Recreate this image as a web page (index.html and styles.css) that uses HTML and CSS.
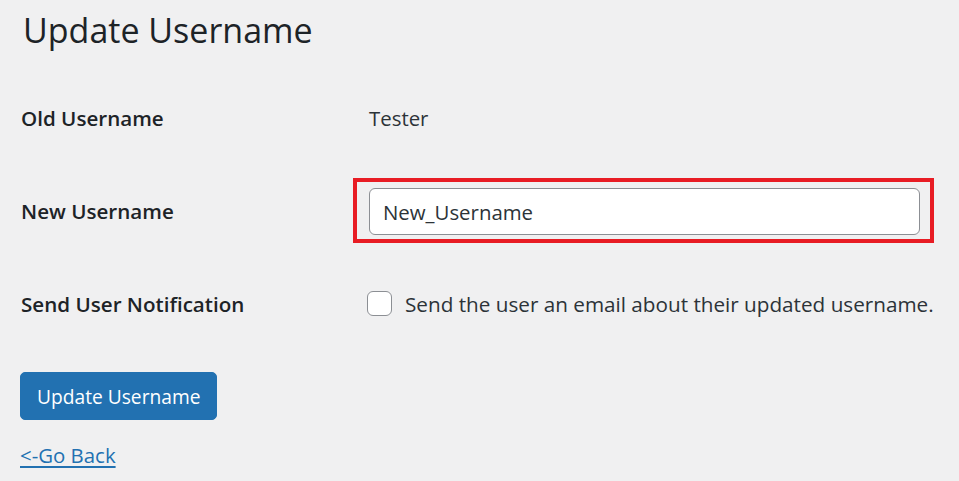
FILE: index.html
```html
<!DOCTYPE html>
<html>
<head>
<meta charset="utf-8">
<link rel="stylesheet" href="styles.css">
</head>
<body>
<div class="wrap">
  <h1 class="title">Update Username</h1>
  <div class="form-table">
    <div class="label">Old Username</div>
    <div class="field">Tester</div>
    <div class="label">New Username</div>
    <div class="field">
      <div class="highlight">
        <input class="text-input" type="text" value="New_Username">
      </div>
    </div>
    <div class="label">Send User Notification</div>
    <div class="field">
      <label class="check-label"><span class="checkbox"></span>Send the user an email about their updated username.</label>
    </div>
  </div>
  <button class="button-primary">Update Username</button>
  <div class="back"><a href="#" class="back-link">&lt;-Go Back</a></div>
</div>
</body>
</html>
```
FILE: styles.css
```css
html, body {
  margin: 0;
  padding: 0;
  background: #f0f0f1;
}
body {
  font-family: "Open Sans", "Noto Sans", sans-serif;
  color: #1d2327;
  font-size: 20px;
}
.wrap {
  padding: 0 0 0 20px;
}
.title {
  margin: 8px 0 0 3px;
  font-size: 34px;
  font-weight: 400;
  line-height: 44px;
  color: #1d2327;
}
.form-table {
  margin-top: 19px;
  display: grid;
  grid-template-columns: 349px 1fr;
  grid-auto-rows: 93px;
  align-items: center;
}
.label {
  font-weight: 600;
  font-size: 20.6px;
  padding-left: 1px;
}
.field {
  font-size: 20.4px;
  color: #2c3338;
}
.highlight {
  margin-left: -16px;
  width: 581px;
  border: 4px solid #e81c24;
  padding: 6px 10px 4px 12px;
  box-sizing: border-box;
}
.text-input {
  display: block;
  width: 100%;
  box-sizing: border-box;
  height: 47px;
  border: 1px solid #8c8f94;
  border-radius: 6px;
  background: #fff;
  padding: 0 13px;
  font-family: inherit;
  font-size: 20.4px;
  color: #2c3338;
  outline: none;
}
.check-label {
  display: flex;
  align-items: center;
  gap: 13px;
  color: #2c3338;
  margin-left: -2px;
  font-size: 20.7px;
}
.checkbox {
  width: 25px;
  height: 25px;
  box-sizing: border-box;
  border: 1px solid #8c8f94;
  border-radius: 6px;
  background: #fff;
  flex: none;
}
.button-primary {
  display: block;
  margin-top: 22px;
  height: 48px;
  padding: 0 16px;
  background: #2271b1;
  color: #fff;
  border: 1px solid #2271b1;
  border-radius: 5px;
  font-family: inherit;
  font-size: 19.2px;
  cursor: pointer;
}
.back {
  margin-top: 20px;
  line-height: 30px;
}
.back-link {
  color: #2271b1;
  font-size: 20.4px;
  text-decoration: underline;
  text-underline-offset: 3px;
}
```
